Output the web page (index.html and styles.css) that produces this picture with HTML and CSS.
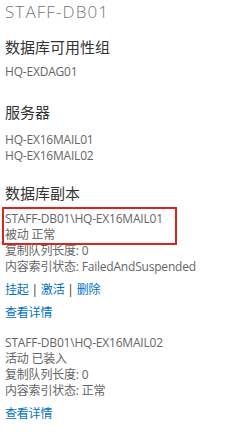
FILE: index.html
```html
<!DOCTYPE html>
<html lang="zh-CN">
<head>
    <meta charset="UTF-8">
    <link rel="stylesheet" href="styles.css">
</head>
<body>

    <h1 class="title">STAFF-DB01</h1>

    <h2 class="section-head first">数据库可用性组</h2>
    <div class="info">HQ-EXDAG01</div>

    <h2 class="section-head">服务器</h2>
    <div class="info servers">
        <div>HQ-EX16MAIL01</div>
        <div>HQ-EX16MAIL02</div>
    </div>

    <h2 class="section-head copies-head">数据库副本</h2>

    <div class="copy">
        <div class="copy-box">
            <div>STAFF-DB01\HQ-EX16MAIL01</div>
            <div>被动 正常</div>
        </div>
        <div>复制队列长度: 0</div>
        <div>内容索引状态: FailedAndSuspended</div>
        <div class="actions">
            <a href="#">挂起</a> | <a href="#">激活</a> | <a href="#">删除</a>
        </div>
        <div class="details"><a href="#">查看详情</a></div>
    </div>

    <div class="copy">
        <div>STAFF-DB01\HQ-EX16MAIL02</div>
        <div>活动 已装入</div>
        <div>复制队列长度: 0</div>
        <div>内容索引状态: 正常</div>
        <div class="details"><a href="#">查看详情</a></div>
    </div>

</body>
</html>
```

FILE: styles.css
```css
body {
    margin: 0;
    padding: 0 5px;
    background: #fff;
    color: #666;
    font-family: "Segoe UI", "Open Sans", "Noto Sans CJK SC", sans-serif;
    font-size: 12px;
    line-height: 16px;
    letter-spacing: -0.2px;
}

.title {
    font-size: 17px;
    font-weight: 300;
    line-height: 22px;
    letter-spacing: 1.1px;
    color: #777;
    margin: 1px 0 0;
}

.section-head {
    font-size: 15px;
    font-weight: normal;
    line-height: 20px;
    letter-spacing: 0;
    color: #333;
    margin: 22px 0 7px;
}

.section-head.first {
    margin-top: 14px;
}

.servers {
    margin-top: 10px;
}

.section-head.copies-head {
    margin-top: 19px;
    margin-bottom: 4px;
}

/* red highlight round the first copy */
.copy-box {
    border: 2px solid #d9261c;
    margin: 0 0 -2px -3px;
    padding: 2px 0 0 1px;
    width: 170px;
}

.actions {
    margin-top: 7px;
    color: #333;
}

.actions a,
.details a {
    color: #0072c6;
    text-decoration: none;
}

.details {
    margin-top: 7px;
}

.copy + .copy {
    margin-top: 14px;
}
```
